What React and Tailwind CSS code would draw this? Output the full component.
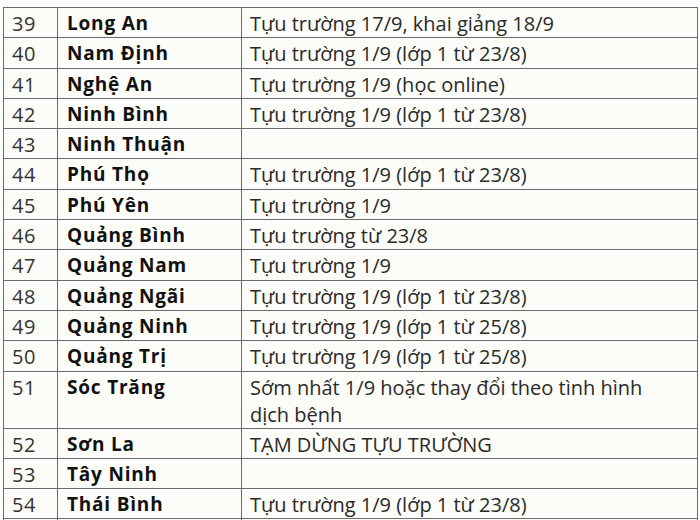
import React from "react";

const rows = [
  ["39", "Long An", "Tựu trường 17/9, khai giảng 18/9"],
  ["40", "Nam Định", "Tựu trường 1/9 (lớp 1 từ 23/8)"],
  ["41", "Nghệ An", "Tựu trường 1/9 (học online)"],
  ["42", "Ninh Bình", "Tựu trường 1/9 (lớp 1 từ 23/8)"],
  ["43", "Ninh Thuận", ""],
  ["44", "Phú Thọ", "Tựu trường 1/9 (lớp 1 từ 23/8)"],
  ["45", "Phú Yên", "Tựu trường 1/9"],
  ["46", "Quảng Bình", "Tựu trường từ 23/8"],
  ["47", "Quảng Nam", "Tựu trường 1/9"],
  ["48", "Quảng Ngãi", "Tựu trường 1/9 (lớp 1 từ 23/8)"],
  ["49", "Quảng Ninh", "Tựu trường 1/9 (lớp 1 từ 25/8)"],
  ["50", "Quảng Trị", "Tựu trường 1/9 (lớp 1 từ 25/8)"],
  ["51", "Sóc Trăng", "Sớm nhất 1/9 hoặc thay đổi theo tình hình dịch bệnh"],
  ["52", "Sơn La", "TẠM DỪNG TỰU TRƯỜNG"],
  ["53", "Tây Ninh", ""],
  ["54", "Thái Bình", "Tựu trường 1/9 (lớp 1 từ 23/8)"],
  ["", "", ""],
];

export default function App() {
  return (
    <div
      className="w-[700px] h-[520px] overflow-hidden bg-[#fcfcf8] pt-[7px] pl-[3px]"
      style={{ fontFamily: '"Open Sans", "Noto Sans", sans-serif' }}
    >
      <table className="border-collapse table-fixed w-[694px]">
        <colgroup>
          <col className="w-[54px]" />
          <col className="w-[184px]" />
          <col className="w-[456px]" />
        </colgroup>
        <tbody>
          {rows.map(([n, name, note], i) => {
            const tall = n === "51";
            return (
              <tr key={i} className={tall ? "h-[55px]" : "h-[30.3px]"}>
                <td className="border-[1.5px] border-[#6a6a6a] align-top pl-[8px] pt-[2px] text-[20px] leading-[27px] text-[#333] tracking-[0.5px]">
                  {n}
                </td>
                <td className="border-[1.5px] border-[#6a6a6a] align-top pl-[9px] pt-[2px] text-[19px] leading-[27px] font-bold text-[#111] tracking-[0.8px]">
                  {name}
                </td>
                <td className="border-[1.5px] border-[#6a6a6a] align-top pl-[8px] pt-[2px] text-[20px] leading-[27px] text-[#2a2a2a] pr-[36px]">
                  {note}
                </td>
              </tr>
            );
          })}
        </tbody>
      </table>
    </div>
  );
}
